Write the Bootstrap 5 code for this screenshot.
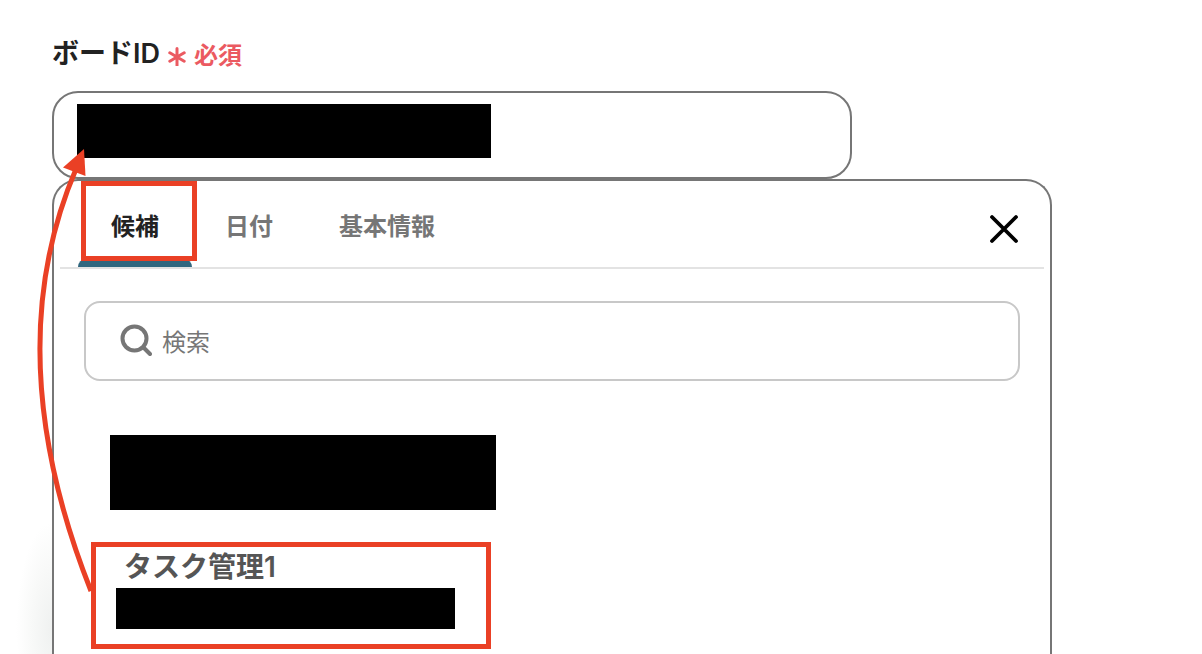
<!DOCTYPE html>
<html lang="ja">
<head>
<meta charset="utf-8">
<meta name="viewport" content="width=device-width, initial-scale=1">
<title>ボードID</title>
<link href="https://cdn.jsdelivr.net/npm/bootstrap@5.3.0/dist/css/bootstrap.min.css" rel="stylesheet">
<style>
  body { font-family: Inter, "Noto Sans CJK JP", sans-serif; color: #222; }
  .board-form { padding: 36px 52px 0; overflow: hidden; }
  .field-label { font-size: 27px; line-height: 36px; font-weight: 600; }
  .required-note { font-size: 24px; line-height: 36px; font-weight: 600; color: #eb5a61; padding-top: 2px; }
  .board-box { max-width: 800px; margin-top: 17px; }
  .board-input { height: 88px; border: 2px solid #767676; border-radius: 26px; padding: 0 24px; font-size: 26px; }
  .masked { display: block; max-width: 100%; background: #000; }
  .masked-value { width: 414px; height: 54px; left: 25px; top: 13px; }
  .masked-option { width: 386px; height: 75px; }
  .masked-detail { width: 339px; height: 41px; }
  .picker { max-width: 1000px; border: 2px solid #767676; border-bottom: 0; border-radius: 26px 26px 0 0; background: #fff; }
  .picker-shade { left: -38px; top: 340px; width: 36px; height: 180px; background: radial-gradient(ellipse at 100% 60%, #eff1f0 0, #f8f9f8 40%, #fff 70%); }
  .picker-head { margin: 0 6px; padding: 0 24px 0 18px; border-bottom: 2px solid #e3e3e3; }
  .picker-tab { height: 86px; padding: 6px 33px 0; border: 0; background: none; font-size: 24px; line-height: 36px; font-weight: 600; color: #767676; }
  .picker-tab.active { color: #222; }
  .picker-tab.active::after { content: ""; position: absolute; left: 0; right: 0; bottom: 0; height: 8px; background: #31677f; border-radius: 8px 8px 0 0; }
  .picker-close { border: 0; background: none; margin-top: 10px; }
  .picker-body { padding: 32px 30px 0; }
  .search-box { height: 80px; padding: 0 34px; border: 2px solid #c8c8c8; border-radius: 16px; }
  .search-box .form-control { font-size: 24px; color: #222; padding: 4px 10px 0; }
  .search-box .form-control::placeholder { color: #767676; opacity: 1; }
  .options { padding: 54px 7px 0; }
  .option { border: 0; background: none; padding: 0 19px 32px; }
  .option-picked { width: 400px; max-width: 100%; border: 5px solid #ea4025; padding: 0 20px 15px; }
  .option-title { font-size: 28px; line-height: 41px; font-weight: 600; color: #555; padding-left: 8px; }
  .tab-mark { left: 3px; top: 0; width: 116px; height: 80px; border: 5px solid #ea4025; z-index: 2; }
  .flow-arrow { left: -20px; top: 55px; pointer-events: none; z-index: 3; }
</style>
</head>
<body>
<form class="board-form d-flex flex-column vh-100">
  <div class="d-flex align-items-start gap-2">
    <label class="field-label" for="board">ボードID</label>
    <span class="required-note d-flex align-items-center">
      <svg class="me-2" width="18" height="20" viewBox="0 0 18 20" fill="none" stroke="#eb5a61" stroke-width="3" stroke-linecap="round" aria-hidden="true"><path d="M9 2.500V19.500M1.800 6.800L16.200 15.200M16.200 6.800L1.800 15.200"/></svg>必須
    </span>
  </div>

  <div class="position-relative">
    <div class="board-box position-relative">
      <input class="form-control board-input" id="board" type="text">
      <span class="masked masked-value position-absolute"></span>
    </div>
    <svg class="flow-arrow position-absolute" width="80" height="470" viewBox="32 130 80 470" aria-hidden="true">
      <path d="M91 592Q-3 355 76 170" fill="none" stroke="#ea4025" stroke-width="5"/>
      <path d="M84 150L63 168.500L85.500 177Z" fill="#ea4025"/>
    </svg>
  </div>

  <section class="picker position-relative flex-grow-1 w-100">
    <div class="picker-shade position-absolute"></div>
    <div class="picker-head d-flex align-items-center justify-content-between">
      <div class="d-flex" role="tablist">
        <div class="position-relative">
          <button class="picker-tab active position-relative" type="button" role="tab" aria-selected="true">候補</button>
          <span class="tab-mark position-absolute"></span>
        </div>
        <button class="picker-tab" type="button" role="tab" aria-selected="false">日付</button>
        <button class="picker-tab" type="button" role="tab" aria-selected="false">基本情報</button>
      </div>
      <button class="picker-close d-flex p-0" type="button" aria-label="閉じる">
        <svg width="32" height="32" viewBox="0 0 32 32" fill="none" stroke="#000" stroke-width="3.800" stroke-linecap="round"><path d="M4 4L28 28M28 4L4 28"/></svg>
      </button>
    </div>
    <div class="picker-body">
      <div class="search-box d-flex align-items-center">
        <svg class="flex-shrink-0" width="32" height="34" viewBox="0 0 32 34" fill="none" stroke="#767676" stroke-width="4" stroke-linecap="round" aria-hidden="true"><circle cx="14.500" cy="14.500" r="12"/><path d="M23.500 23.500L30 30"/></svg>
        <input class="form-control border-0 bg-transparent shadow-none" type="search" placeholder="検索" aria-label="検索">
      </div>
      <div class="options d-flex flex-column align-items-start">
        <button class="option text-start" type="button" aria-label="候補 1"><span class="masked masked-option"></span></button>
        <button class="option option-picked text-start" type="button">
          <span class="option-title d-block">タスク管理1</span>
          <span class="masked masked-detail"></span>
        </button>
      </div>
    </div>
  </section>
</form>
<script src="https://cdn.jsdelivr.net/npm/bootstrap@5.3.0/dist/js/bootstrap.bundle.min.js"></script>
</body>
</html>
